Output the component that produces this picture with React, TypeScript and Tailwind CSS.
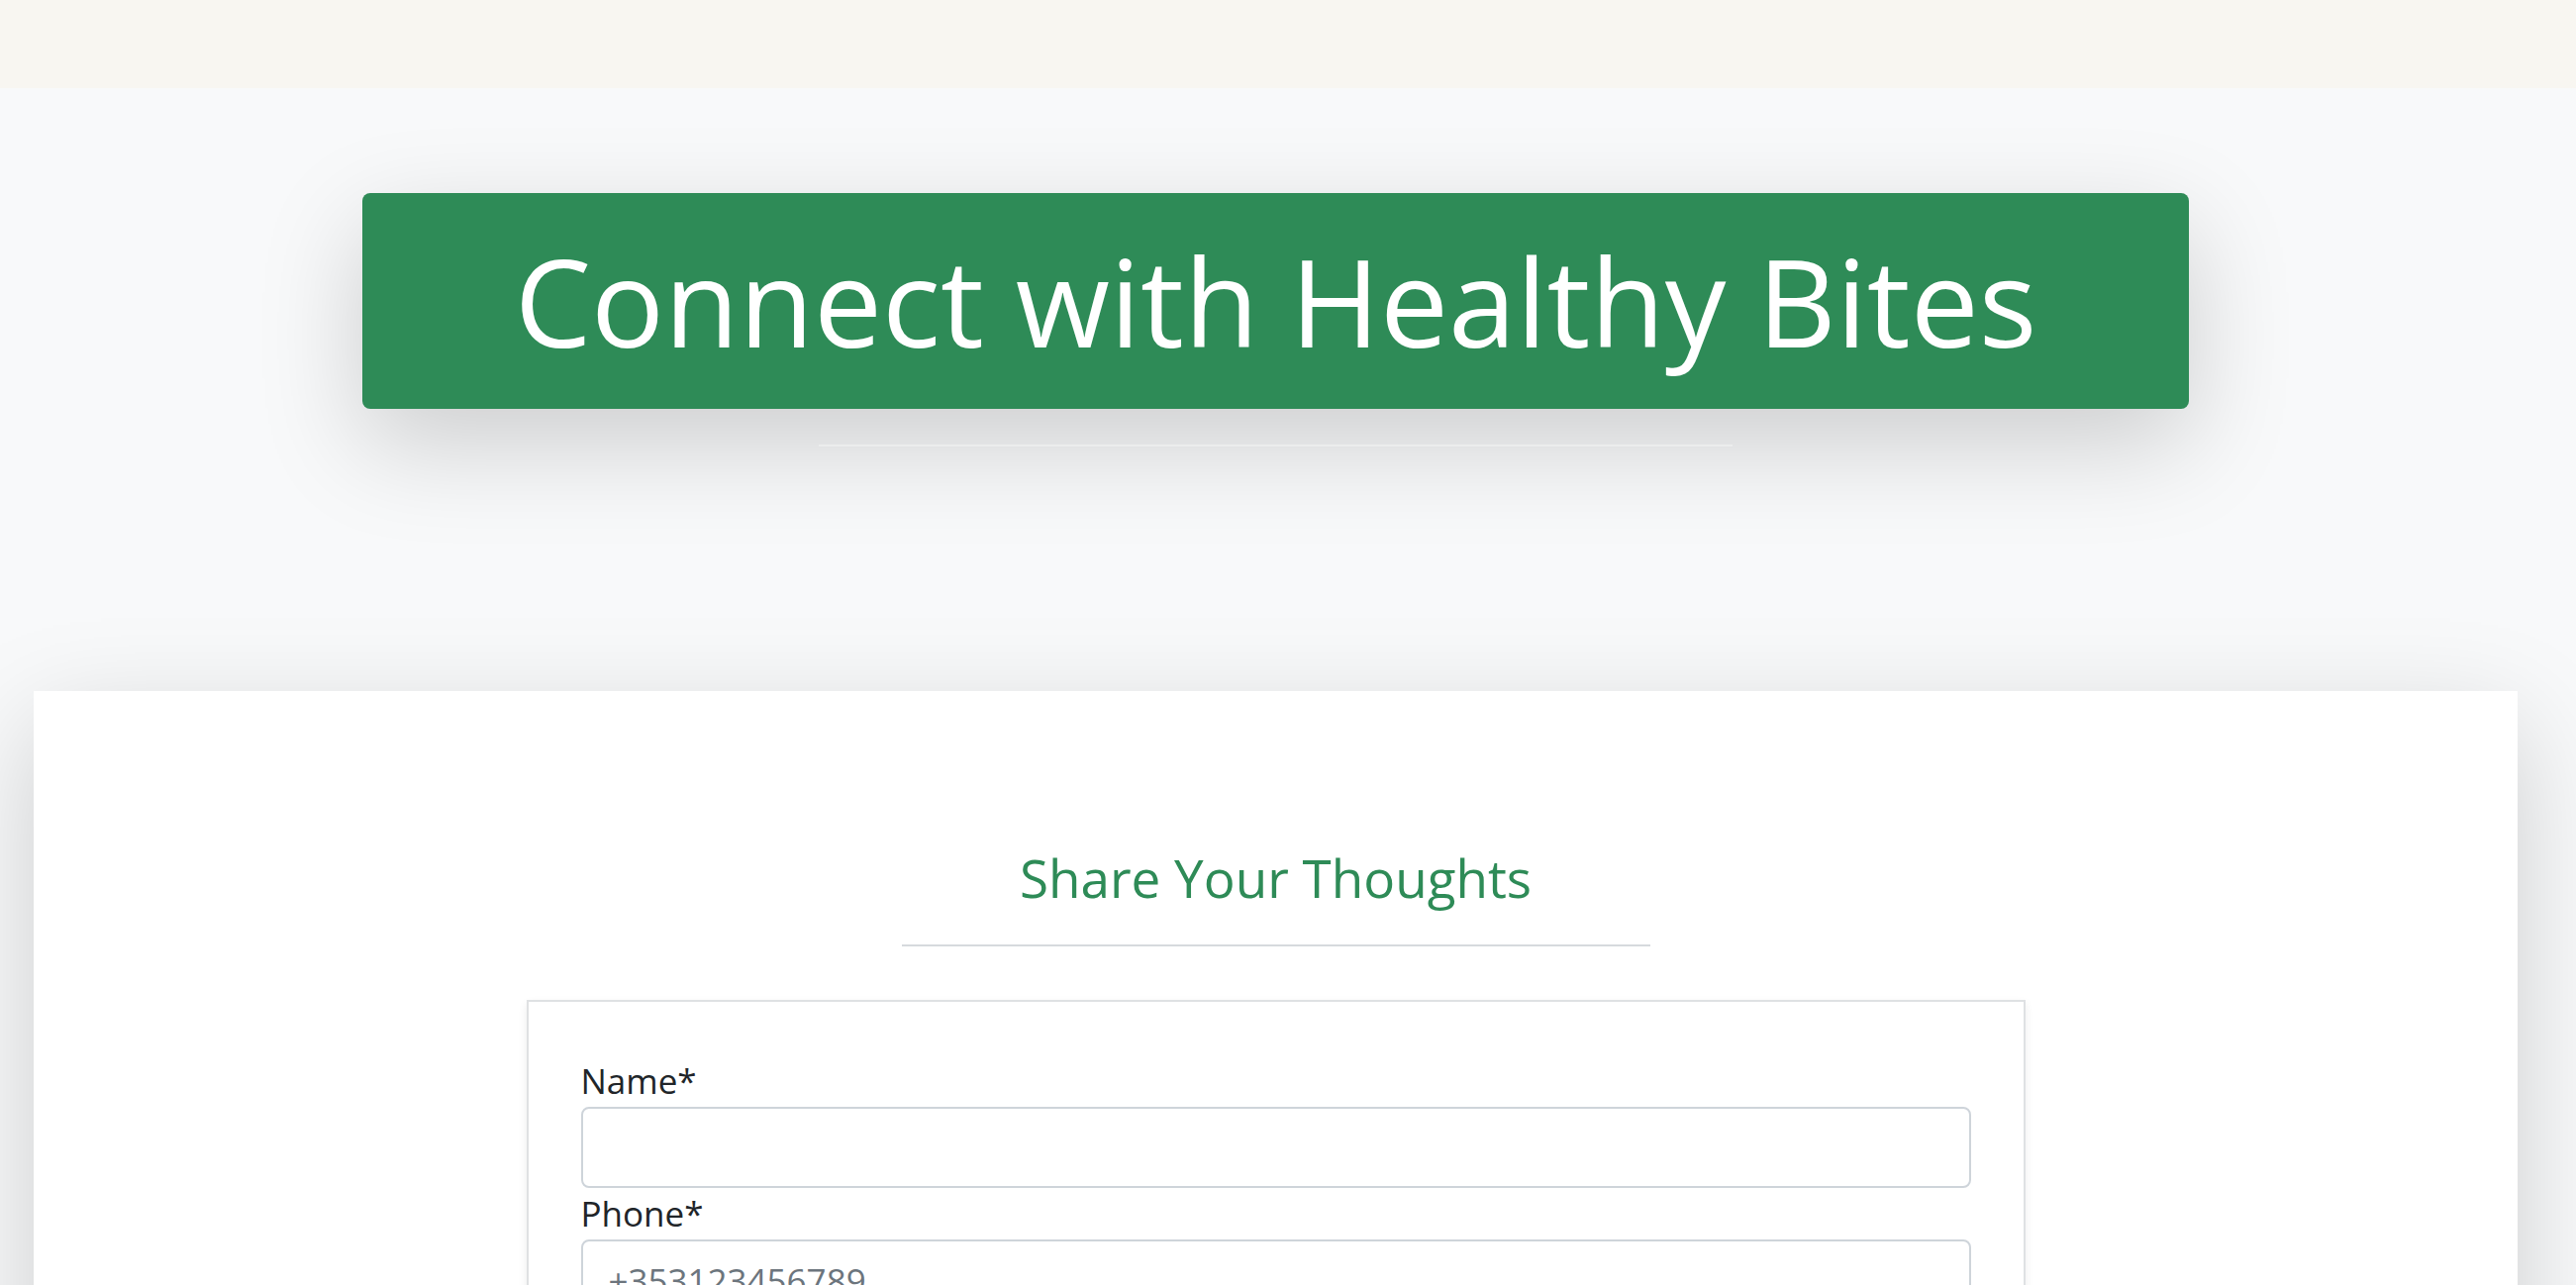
const labelCls = "block text-[35px] leading-[52px] text-[#212529]";
const inputCls =
  "block w-full h-[82px] rounded-[8px] border-2 border-[#ced4da] bg-white px-[26px] text-[35px] leading-[52px] text-[#212529] placeholder:text-[#6c757d] outline-none";

const App = () => {
  return (
    <div className="h-[1298px] overflow-hidden bg-[#f8f9fa] font-['Open_Sans',sans-serif]">
      {/* Top bar */}
      <header className="h-[89px] bg-[#f8f6f1]" />

      <main className="w-[2577px] pt-[106px]">
        {/* Hero banner */}
        <div className="mx-auto w-[1845px] rounded-[8px] bg-[#2e8b57] py-[35px] text-center text-[123px] leading-[148px] text-white shadow-[0_35px_104px_rgba(0,0,0,0.175)]">
          Connect with Healthy Bites
        </div>
        <div className="mx-auto mt-[36px] h-[2px] w-[923px] bg-[#eceded]" />

        {/* Feedback card */}
        <section className="mx-[34px] mt-[247px] bg-white pt-[157px] pb-[120px] shadow-[0_35px_104px_rgba(0,0,0,0.175)]">
          <h2 className="text-center text-[53px] leading-[64px] text-[#2e8b57]">
            Share Your Thoughts
          </h2>
          <div className="mx-auto mt-[35px] h-[2px] w-[756px] bg-[#d6dadd]" />

          <form className="mx-auto mt-[54px] w-[1514px] border-2 border-[#dfe1e3] px-[53px] pt-[54px] pb-[52px] shadow-[0_4px_9px_rgba(0,0,0,0.075)]">
            <label className={labelCls} htmlFor="name">
              Name*
            </label>
            <input id="name" type="text" className={inputCls} />

            <label className={labelCls} htmlFor="phone">
              Phone*
            </label>
            <input
              id="phone"
              type="tel"
              placeholder="+353123456789"
              className={inputCls}
            />

            <label className={labelCls} htmlFor="email">
              Email*
            </label>
            <input id="email" type="email" className={inputCls} />

            <label className={labelCls} htmlFor="message">
              Message
            </label>
            <textarea
              id="message"
              rows={4}
              className="block w-full rounded-[8px] border-2 border-[#ced4da] bg-white px-[26px] py-[13px] text-[35px] leading-[52px] outline-none"
            />
          </form>
        </section>
      </main>
    </div>
  );
};

export default App;
